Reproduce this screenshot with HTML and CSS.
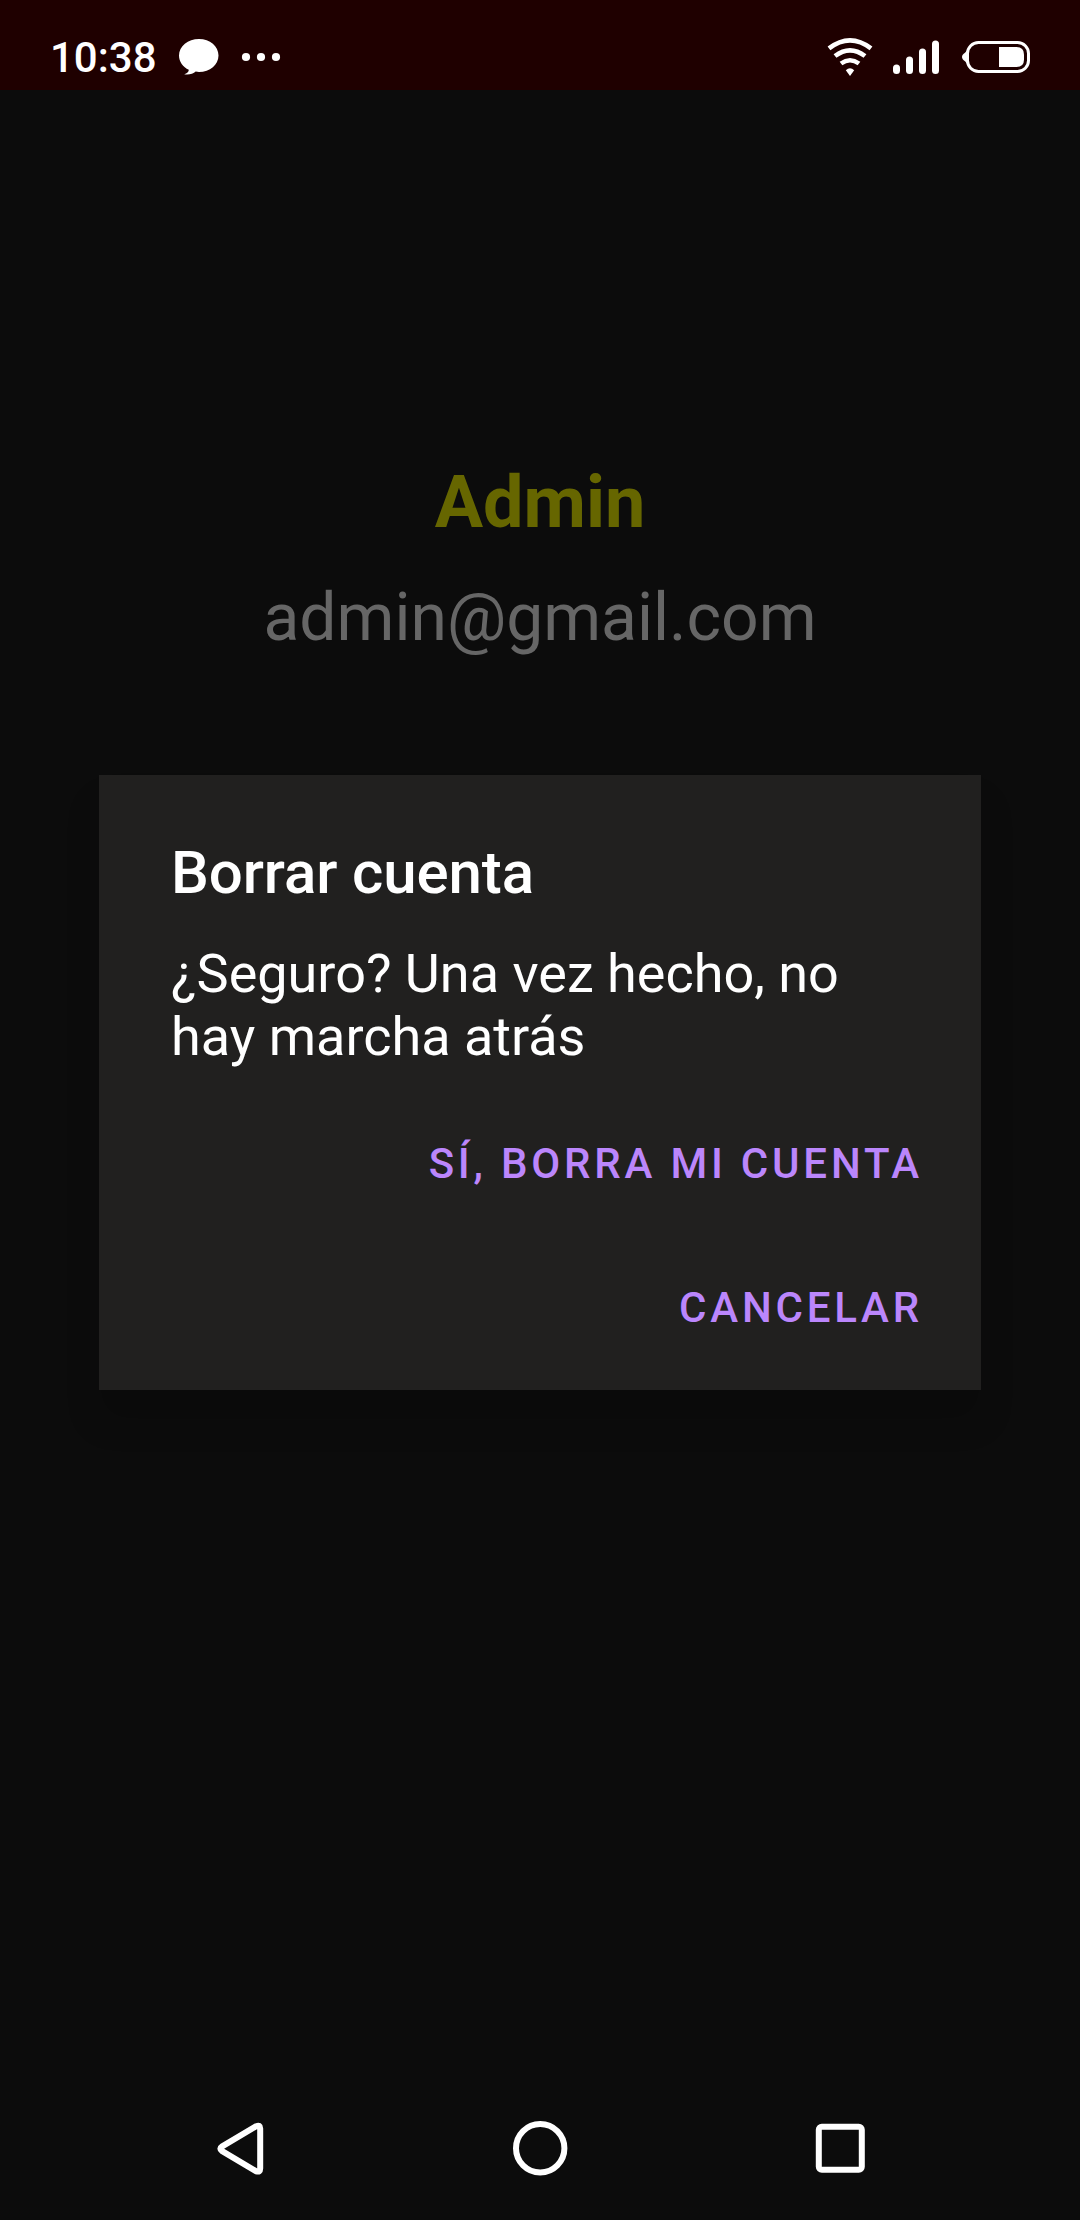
FILE: index.html
```html
<!DOCTYPE html>
<html lang="es">
<head>
<meta charset="utf-8">
<title>Borrar cuenta</title>
<link rel="stylesheet" href="styles.css">
</head>
<body>
<div class="screen">
  <header class="status">
    <span class="time">10:38</span>
    <svg class="chat" width="40" height="37" viewBox="0 0 40 37"><path fill="#fff" d="M20 0C9 0 0 7.300 0 16.500c0 6.300 4 11.500 9.800 14.300C9.800 33 8 34.500 5.200 35.300c4.600 1 9-.6 11.500-2.700 1 .3 2.200.4 3.300.4 11 0 19.500-7.300 19.500-16.500S31 0 20 0z"/></svg>
    <svg class="dots" width="40" height="10" viewBox="0 0 40 10" fill="#fff"><circle cx="5" cy="5" r="4.100"/><circle cx="20" cy="5" r="4.100"/><circle cx="35" cy="5" r="4.100"/></svg>
    <span class="spacer"></span>
    <svg class="wifi" width="46" height="40" viewBox="827 37 46 40"><g fill="none" stroke="#fff" stroke-width="4.600"><path d="M829 48.300Q850 32.300 871 48.300"/><path d="M835 56Q850 44.600 865 56"/><path d="M841 63.500Q850 57 859 63.500"/></g><path fill="#fff" d="M845.800 70.300Q850 66 854.200 70.300L850 76z"/></svg>
    <svg class="signal" width="47" height="36" viewBox="0 0 47 36" fill="#fff"><rect x="0" y="24.500" width="7" height="9.500" rx="3.500"/><rect x="13" y="16.500" width="7" height="17.500" rx="3.500"/><rect x="26" y="8.500" width="7" height="25.500" rx="3.500"/><rect x="39" y="0.500" width="7" height="33.500" rx="3.500"/></svg>
    <svg class="battery" width="69" height="34" viewBox="961 40 69 34"><path fill="#fff" d="M967.500 50.500v13c-1 0-1.500-1.500-2.500-2.300-4-2.200-4-6.200 0-8.400 1-.8 1.500-2.300 2.500-2.300z"/><rect x="967.500" y="42.500" width="61" height="29" rx="11" fill="none" stroke="#fff" stroke-width="3"/><path fill="#fff" d="M999 47h17.500q7.500 0 7.500 7.500v5q0 7.500-7.500 7.500H999z"/></svg>
  </header>
  <main class="profile">
    <h1 class="name">Admin</h1>
    <p class="email">admin@gmail.com</p>
  </main>
  <nav class="navbar">
    <svg width="90" height="90" viewBox="0 0 90 90"><path d="M22.200 46.300Q18.500 48.700 22.200 51.200L56.300 71.300Q60.200 72.500 60.200 68.500V28.500Q60.200 24.500 56.300 26.200z"/></svg>
    <svg width="90" height="90" viewBox="0 0 90 90"><circle cx="45.200" cy="48.200" r="24.200"/></svg>
    <svg width="90" height="90" viewBox="0 0 90 90"><rect x="23.800" y="26.800" width="43" height="43" rx="3"/></svg>
  </nav>
  <div class="overlay">
    <section class="dialog" role="dialog">
      <h2 class="title">Borrar cuenta</h2>
      <p class="message">¿Seguro? Una vez hecho, no hay marcha atrás</p>
      <div class="actions">
        <button class="action">SÍ, BORRA MI CUENTA</button>
        <button class="action">CANCELAR</button>
      </div>
    </section>
  </div>
</div>
</body>
</html>
```
FILE: styles.css
```css
* { box-sizing: border-box; }
body { margin: 0; background: #0c0c0c; font-family: Roboto, sans-serif; }
h1, h2, p { margin: 0; }
svg { display: block; flex: none; }

.screen { position: relative; display: flex; flex-direction: column; width: 1080px; height: 2220px; overflow: hidden; }

.status { display: flex; align-items: flex-start; height: 90px; padding: 0 50px; background: #1f0000; color: #fff; }
.time { width: 129px; margin-top: 33px; font-size: 42px; font-weight: 500; line-height: 49px; }
.chat { margin-top: 39px; }
.dots { margin: 52px 0 0 22px; }
.spacer { flex: 1; }
.wifi { margin-top: 37px; }
.signal { margin: 40px 0 0 20px; }
.battery { margin: 40px 0 0 21px; }

.profile { flex: 1; padding-top: 371px; text-align: center; }
.name { color: #666600; font-size: 72px; font-weight: 700; line-height: 84px; }
.email { margin-top: 34px; color: #666; font-size: 66px; line-height: 78px; }

.navbar { display: flex; height: 120px; padding-left: 200px; }
.navbar svg { fill: none; stroke: #fff; stroke-width: 6px; stroke-linejoin: round; }
.navbar svg:nth-child(2) { margin: 0 210px 0 205px; }

.overlay { position: absolute; inset: 0; display: flex; align-items: flex-start; justify-content: center; padding-top: 775px; }
.dialog { width: 882px; height: 615px; padding: 63px 58px 10px 72px; background: #21201f; box-shadow: 0 30px 32px rgba(0, 0, 0, .16); color: #fff; }
.title { font-size: 60px; font-weight: 500; line-height: 70px; letter-spacing: -.1px; }
.message { width: 720px; margin-top: 34px; font-size: 54px; line-height: 63px; }
.actions { display: flex; flex-direction: column; align-items: flex-end; margin-top: 24px; }
.action { height: 144px; padding: 0; border: 0; background: none; color: #bb86fc; font: 500 42px/144px Roboto, sans-serif; letter-spacing: 3.8px; }
```
